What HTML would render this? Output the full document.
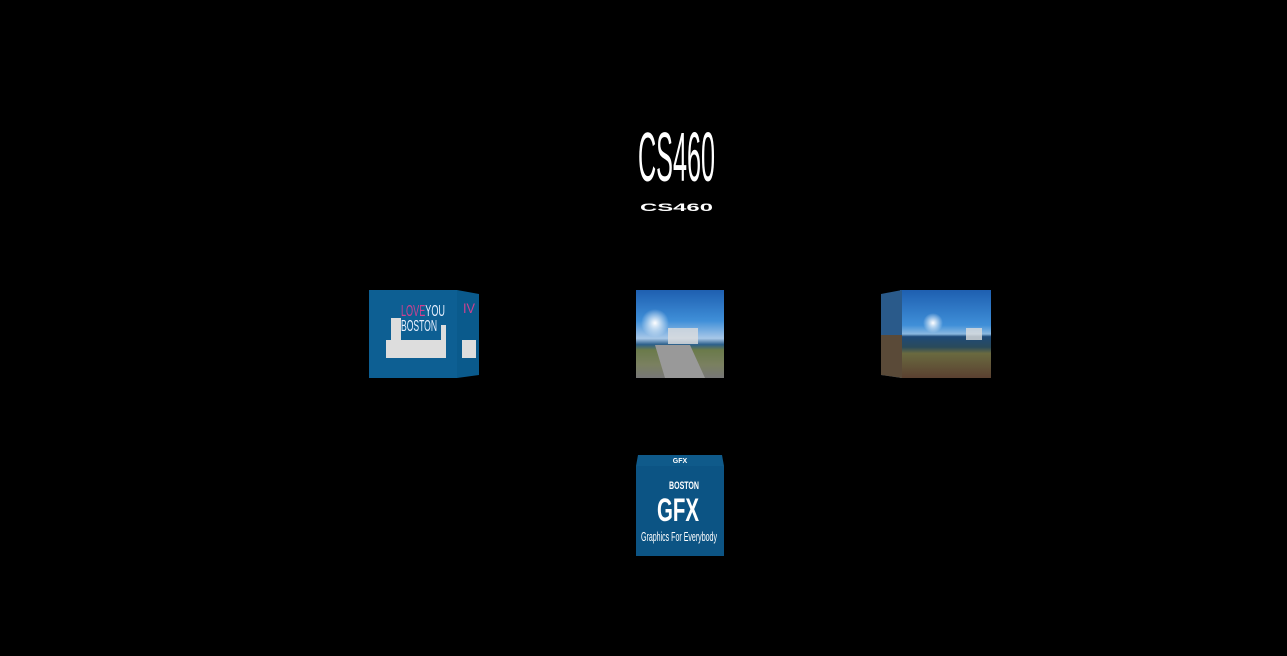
<!DOCTYPE html>
<html><head><meta charset="utf-8"><style>
html,body{margin:0;padding:0;background:#000;width:1287px;height:656px;overflow:hidden}
</style></head><body>
<svg width="1287" height="656" viewBox="0 0 1287 656" xmlns="http://www.w3.org/2000/svg">
<defs>
<linearGradient id="sky" x1="0" y1="0" x2="0" y2="1">
<stop offset="0" stop-color="#1e5fb0"/><stop offset="0.35" stop-color="#3f8fd8"/><stop offset="0.55" stop-color="#a8c8e8"/><stop offset="0.62" stop-color="#2c5f8a"/><stop offset="0.68" stop-color="#6a7a4a"/><stop offset="0.85" stop-color="#7a8060"/><stop offset="1" stop-color="#777"/>
</linearGradient>
<linearGradient id="sky2" x1="0" y1="0" x2="0" y2="1">
<stop offset="0" stop-color="#1e5fb0"/><stop offset="0.4" stop-color="#3f8fd8"/><stop offset="0.5" stop-color="#8ab8e0"/><stop offset="0.53" stop-color="#1e4a78"/><stop offset="0.65" stop-color="#2a4a5a"/><stop offset="0.72" stop-color="#6a6a40"/><stop offset="1" stop-color="#5a4030"/>
</linearGradient>
<radialGradient id="sun" cx="0.5" cy="0.5" r="0.5"><stop offset="0" stop-color="#fff"/><stop offset="1" stop-color="#fff" stop-opacity="0"/></radialGradient>
</defs>
<text x="638" y="181" fill="#fff" font-family="Liberation Sans Narrow, Liberation Sans, sans-serif" font-size="70" textLength="77" lengthAdjust="spacingAndGlyphs">CS460</text>
<text x="640" y="211" fill="#fff" font-family="Liberation Sans, sans-serif" font-weight="bold" font-size="11" textLength="73" lengthAdjust="spacingAndGlyphs">CS460</text>

<!-- left cube -->
<rect x="369" y="290" width="88" height="88" fill="#0d5f93"/>
<polygon points="457,290 479,294 479,375 457,378" fill="#0a5a8c"/>
<text x="401" y="316" font-family="Liberation Sans Narrow, Liberation Sans, sans-serif" font-size="16" fill="#e8f0ff" textLength="44" lengthAdjust="spacingAndGlyphs"><tspan fill="#d04090">LOVE</tspan>YOU</text>
<text x="401" y="331" font-family="Liberation Sans Narrow, Liberation Sans, sans-serif" font-size="16" fill="#e8f0ff" textLength="36" lengthAdjust="spacingAndGlyphs">BOSTON</text>
<g fill="#ddd">
<rect x="386" y="340" width="60" height="18"/><rect x="391" y="318" width="10" height="40"/><rect x="441" y="325" width="5" height="33"/><rect x="410" y="343" width="6" height="15"/>
<rect x="462" y="340" width="14" height="18"/>
</g>
<text x="463" y="313" font-family="Liberation Sans Narrow, Liberation Sans, sans-serif" font-size="14" fill="#d04090" textLength="12" lengthAdjust="spacingAndGlyphs">IV</text>

<!-- center cube -->
<rect x="636" y="290" width="88" height="88" fill="url(#sky)"/>
<circle cx="655" cy="323" r="14" fill="url(#sun)"/>
<rect x="668" y="328" width="30" height="16" fill="#ddd" opacity="0.8"/>
<polygon points="655,345 690,345 705,378 665,378" fill="#999"/>

<!-- right cube -->
<rect x="900" y="290" width="91" height="88" fill="url(#sky2)"/>
<polygon points="881,294 902,290 902,378 881,375" fill="#2a5a8a"/>
<polygon points="881,335 902,335 902,378 881,375" fill="#5a4a38"/>
<circle cx="933" cy="323" r="10" fill="url(#sun)"/>
<rect x="966" y="328" width="16" height="12" fill="#ddd" opacity="0.8"/>

<!-- bottom cube -->
<polygon points="638,455 722,455 724,466 636,466" fill="#0f5a8a"/>
<rect x="636" y="466" width="88" height="90" fill="#0c5484"/>
<text x="680" y="463" font-family="Liberation Sans, sans-serif" font-weight="bold" font-size="7" fill="#fff" text-anchor="middle">GFX</text>
<text x="669" y="489" font-family="Liberation Sans Narrow, Liberation Sans, sans-serif" font-weight="bold" font-size="11" fill="#fff" textLength="30" lengthAdjust="spacingAndGlyphs">BOSTON</text>
<text x="657" y="521" font-family="Liberation Sans, sans-serif" font-weight="bold" font-size="32" fill="#fff" textLength="42" lengthAdjust="spacingAndGlyphs">GFX</text>
<text x="641" y="541" font-family="Liberation Sans Narrow, Liberation Sans, sans-serif" font-size="13" fill="#fff" textLength="76" lengthAdjust="spacingAndGlyphs">Graphics For Everybody</text>
</svg>
</body></html>
